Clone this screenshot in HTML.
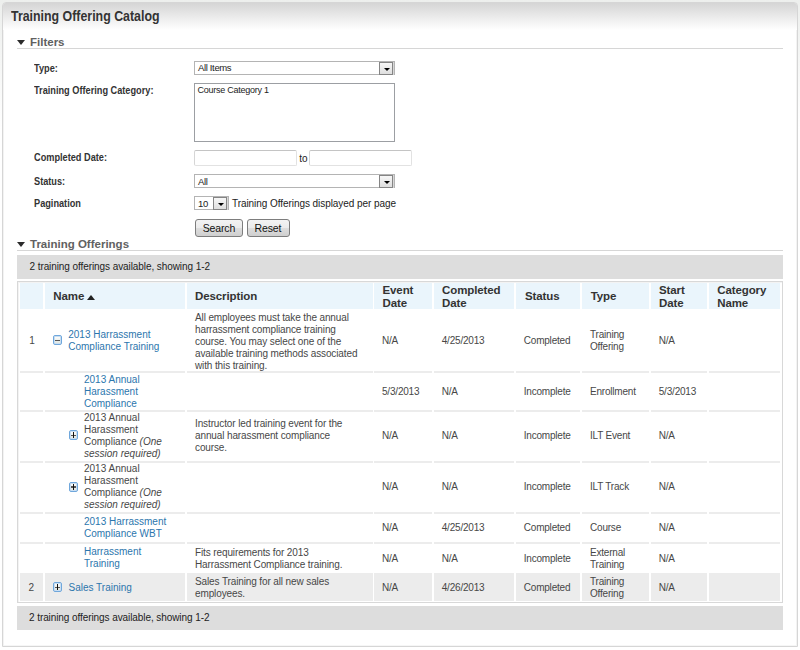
<!DOCTYPE html>
<html><head><meta charset="utf-8"><style>
html,body{margin:0;padding:0;}
body{width:800px;height:650px;position:relative;overflow:hidden;background:linear-gradient(#edefed,#ffffff 130px) no-repeat #fff;font-family:"Liberation Sans",sans-serif;}
.bgw{position:absolute;left:0;top:647px;width:800px;height:3px;background:#fff;}
.t{position:absolute;white-space:nowrap;}
.r{position:absolute;}
.ic{width:9px;height:10px;box-sizing:border-box;border:1px solid #6fa7dc;border-radius:2px;background:linear-gradient(#ffffff,#dde3dd);box-shadow:inset 0 0 0 1px #c9def2;}
.ic .h{position:absolute;left:1px;top:3.5px;width:5px;height:1.5px;background:#555;}
.ic .v{position:absolute;left:3px;top:1px;width:1px;height:6px;background:#111;}
</style></head><body>
<div class="r" style="left:2px;top:2px;width:795px;height:644px;border:1px solid #d6d6d6;border-radius:4px 4px 0 0;background:#fff;box-sizing:border-box;width:796px;height:645px;box-shadow:inset 1px 0 0 #f3f3f3, inset -1px 0 0 #f3f3f3, inset 0 -1px 0 #f6f6f6;"></div>
<div class="r" style="left:3px;top:3px;width:794px;height:27px;background:linear-gradient(#d5d5d5,#e6e6e6 40%,#fff);border-radius:3px 3px 0 0;"></div>
<div class="t" style="left:11px;top:9.95px;font-size:14px;line-height:12px;font-weight:bold;color:#333;letter-spacing:0px;transform:scaleX(0.884);transform-origin:0 0;">Training Offering Catalog</div>
<div class="r" style="left:17px;top:40px;width:0;height:0;border-left:4px solid transparent;border-right:4px solid transparent;border-top:5px solid #2b2b2b;"></div>
<div class="t" style="left:30px;top:35.82px;font-size:11.5px;line-height:12px;font-weight:bold;color:#616161;letter-spacing:0px;">Filters</div>
<div class="r" style="left:17px;top:48px;width:766px;height:1px;background:#d6d6d6;"></div>
<div class="t" style="left:34px;top:61.66px;font-size:10.5px;line-height:12px;font-weight:bold;color:#333;letter-spacing:0px;transform:scaleX(0.875);transform-origin:0 0;">Type:</div>
<div class="t" style="left:34px;top:84.16px;font-size:10.5px;line-height:12px;font-weight:bold;color:#333;letter-spacing:0px;transform:scaleX(0.875);transform-origin:0 0;">Training Offering Category:</div>
<div class="t" style="left:34px;top:150.86px;font-size:10.5px;line-height:12px;font-weight:bold;color:#333;letter-spacing:0px;transform:scaleX(0.875);transform-origin:0 0;">Completed Date:</div>
<div class="t" style="left:34px;top:174.56px;font-size:10.5px;line-height:12px;font-weight:bold;color:#333;letter-spacing:0px;transform:scaleX(0.875);transform-origin:0 0;">Status:</div>
<div class="t" style="left:34px;top:196.86px;font-size:10.5px;line-height:12px;font-weight:bold;color:#333;letter-spacing:0px;transform:scaleX(0.875);transform-origin:0 0;">Pagination</div>
<div class="r" style="left:194px;top:61px;width:201px;height:14px;border:1px solid #b4b4b4;box-sizing:border-box;background:#fff;"></div>
<div class="r" style="left:379px;top:62px;width:14px;height:13px;border:1px solid #858585;box-sizing:border-box;background:linear-gradient(#f7f7f7,#dedede);box-shadow:1px 0 0 #d8d8d8;"></div>
<div class="r" style="left:383.5px;top:68.2px;width:0;height:0;border-left:3px solid transparent;border-right:3px solid transparent;border-top:3.5px solid #000;"></div>
<div class="t" style="left:198px;top:62.21px;font-size:9.5px;line-height:12px;font-weight:normal;color:#222;letter-spacing:-0.35px;">All Items</div>
<div class="r" style="left:194px;top:83px;width:201px;height:59px;border:1px solid #9c9fa3;box-sizing:border-box;background:#fff;"></div>
<div class="t" style="left:197.5px;top:83.58px;font-size:9px;line-height:12px;font-weight:normal;color:#222;letter-spacing:-0.25px;">Course Category 1</div>
<div class="r" style="left:194px;top:150px;width:103px;height:16px;border:1px solid #e2e2e2;border-top-color:#c4c4c4;border-left-color:#d6d6d6;border-radius:2px;box-sizing:border-box;background:#fff;"></div>
<div class="t" style="left:299.2px;top:152.73px;font-size:10px;line-height:12px;font-weight:normal;color:#222;letter-spacing:0px;">to</div>
<div class="r" style="left:309px;top:150px;width:103px;height:16px;border:1px solid #e2e2e2;border-top-color:#c4c4c4;border-left-color:#d6d6d6;border-radius:2px;box-sizing:border-box;background:#fff;"></div>
<div class="r" style="left:194px;top:174px;width:201px;height:14px;border:1px solid #b4b4b4;box-sizing:border-box;background:#fff;"></div>
<div class="r" style="left:379px;top:175px;width:14px;height:13px;border:1px solid #858585;box-sizing:border-box;background:linear-gradient(#f7f7f7,#dedede);box-shadow:1px 0 0 #d8d8d8;"></div>
<div class="r" style="left:383.5px;top:181.2px;width:0;height:0;border-left:3px solid transparent;border-right:3px solid transparent;border-top:3.5px solid #000;"></div>
<div class="t" style="left:198px;top:175.71px;font-size:9.5px;line-height:12px;font-weight:normal;color:#222;letter-spacing:-0.35px;">All</div>
<div class="r" style="left:194px;top:196px;width:35px;height:14px;border:1px solid #b4b4b4;box-sizing:border-box;background:#fff;"></div>
<div class="r" style="left:213px;top:197px;width:14px;height:13px;border:1px solid #858585;box-sizing:border-box;background:linear-gradient(#f7f7f7,#dedede);box-shadow:1px 0 0 #d8d8d8;"></div>
<div class="r" style="left:217.5px;top:203.2px;width:0;height:0;border-left:3px solid transparent;border-right:3px solid transparent;border-top:3.5px solid #000;"></div>
<div class="t" style="left:198px;top:198.01px;font-size:9.5px;line-height:12px;font-weight:normal;color:#222;letter-spacing:-0.35px;">10</div>
<div class="t" style="left:232px;top:197.84px;font-size:10px;line-height:12px;font-weight:normal;color:#222;letter-spacing:-0.06px;">Training Offerings displayed per page</div>
<div class="r" style="left:195px;top:219px;width:48px;height:18px;border:1px solid #7d7d7d;border-radius:3px;box-sizing:border-box;background:linear-gradient(#f3f3f3 0%,#ebebeb 50%,#dddddd 51%,#cfcfcf 100%);"></div>
<div class="t" style="left:202.75px;top:221.96px;font-size:10.5px;line-height:12px;font-weight:normal;color:#111;letter-spacing:-0.15px;">Search</div>
<div class="r" style="left:247px;top:219px;width:43px;height:18px;border:1px solid #7d7d7d;border-radius:3px;box-sizing:border-box;background:linear-gradient(#f3f3f3 0%,#ebebeb 50%,#dddddd 51%,#cfcfcf 100%);"></div>
<div class="t" style="left:254.6px;top:221.96px;font-size:10.5px;line-height:12px;font-weight:normal;color:#111;letter-spacing:-0.15px;">Reset</div>
<div class="r" style="left:17px;top:242px;width:0;height:0;border-left:4px solid transparent;border-right:4px solid transparent;border-top:5px solid #2b2b2b;"></div>
<div class="t" style="left:30px;top:237.62px;font-size:11.5px;line-height:12px;font-weight:bold;color:#616161;letter-spacing:0px;">Training Offerings</div>
<div class="r" style="left:17px;top:250px;width:766px;height:1px;background:#d6d6d6;"></div>
<div class="r" style="left:17px;top:255px;width:766px;height:24px;background:#dddddd;"></div>
<div class="t" style="left:29.5px;top:261.14px;font-size:10px;line-height:12px;font-weight:normal;color:#222;letter-spacing:-0.08px;">2 training offerings available, showing 1-2</div>
<div class="r" style="left:17px;top:281px;width:766px;height:322px;border:1px solid #d8d8d8;box-sizing:border-box;box-shadow:inset 1px 1px 0 #f3f3f3;"></div>
<div class="r" style="left:20px;top:283px;width:23px;height:26px;background:#eaf5fc;"></div>
<div class="r" style="left:45px;top:283px;width:140px;height:26px;background:#eaf5fc;"></div>
<div class="r" style="left:187px;top:283px;width:186px;height:26px;background:#eaf5fc;"></div>
<div class="r" style="left:374px;top:283px;width:58px;height:26px;background:#eaf5fc;"></div>
<div class="r" style="left:434px;top:283px;width:80px;height:26px;background:#eaf5fc;"></div>
<div class="r" style="left:516px;top:283px;width:64px;height:26px;background:#eaf5fc;"></div>
<div class="r" style="left:582px;top:283px;width:67px;height:26px;background:#eaf5fc;"></div>
<div class="r" style="left:651px;top:283px;width:56px;height:26px;background:#eaf5fc;"></div>
<div class="r" style="left:709px;top:283px;width:71px;height:26px;background:#eaf5fc;"></div>
<div class="t" style="left:53.25px;top:290.02px;font-size:11.5px;line-height:12px;font-weight:bold;color:#333;letter-spacing:-0.1px;">Name</div>
<div class="r" style="left:87px;top:295px;width:0;height:0;border-left:4px solid transparent;border-right:4px solid transparent;border-bottom:5px solid #222;"></div>
<div class="t" style="left:195px;top:290.02px;font-size:11.5px;line-height:12px;font-weight:bold;color:#333;letter-spacing:-0.1px;">Description</div>
<div class="t" style="left:382.5px;top:283.52px;font-size:11.5px;line-height:13px;font-weight:bold;color:#333;letter-spacing:-0.1px;">Event<br>Date</div>
<div class="t" style="left:442px;top:283.52px;font-size:11.5px;line-height:13px;font-weight:bold;color:#333;letter-spacing:-0.1px;">Completed<br>Date</div>
<div class="t" style="left:525px;top:290.02px;font-size:11.5px;line-height:12px;font-weight:bold;color:#333;letter-spacing:-0.1px;">Status</div>
<div class="t" style="left:590.7px;top:290.02px;font-size:11.5px;line-height:12px;font-weight:bold;color:#333;letter-spacing:-0.1px;">Type</div>
<div class="t" style="left:659px;top:283.52px;font-size:11.5px;line-height:13px;font-weight:bold;color:#333;letter-spacing:-0.1px;">Start<br>Date</div>
<div class="t" style="left:717.2px;top:283.52px;font-size:11.5px;line-height:13px;font-weight:bold;color:#333;letter-spacing:-0.1px;">Category<br>Name</div>
<div class="r" style="left:20px;top:371px;width:23px;height:2px;background:#ececec;"></div>
<div class="r" style="left:45px;top:371px;width:140px;height:2px;background:#ececec;"></div>
<div class="r" style="left:187px;top:371px;width:186px;height:2px;background:#ececec;"></div>
<div class="r" style="left:374px;top:371px;width:58px;height:2px;background:#ececec;"></div>
<div class="r" style="left:434px;top:371px;width:80px;height:2px;background:#ececec;"></div>
<div class="r" style="left:516px;top:371px;width:64px;height:2px;background:#ececec;"></div>
<div class="r" style="left:582px;top:371px;width:67px;height:2px;background:#ececec;"></div>
<div class="r" style="left:651px;top:371px;width:56px;height:2px;background:#ececec;"></div>
<div class="r" style="left:709px;top:371px;width:71px;height:2px;background:#ececec;"></div>
<div class="r" style="left:20px;top:410px;width:23px;height:2px;background:#ececec;"></div>
<div class="r" style="left:45px;top:410px;width:140px;height:2px;background:#ececec;"></div>
<div class="r" style="left:187px;top:410px;width:186px;height:2px;background:#ececec;"></div>
<div class="r" style="left:374px;top:410px;width:58px;height:2px;background:#ececec;"></div>
<div class="r" style="left:434px;top:410px;width:80px;height:2px;background:#ececec;"></div>
<div class="r" style="left:516px;top:410px;width:64px;height:2px;background:#ececec;"></div>
<div class="r" style="left:582px;top:410px;width:67px;height:2px;background:#ececec;"></div>
<div class="r" style="left:651px;top:410px;width:56px;height:2px;background:#ececec;"></div>
<div class="r" style="left:709px;top:410px;width:71px;height:2px;background:#ececec;"></div>
<div class="r" style="left:20px;top:461px;width:23px;height:2px;background:#ececec;"></div>
<div class="r" style="left:45px;top:461px;width:140px;height:2px;background:#ececec;"></div>
<div class="r" style="left:187px;top:461px;width:186px;height:2px;background:#ececec;"></div>
<div class="r" style="left:374px;top:461px;width:58px;height:2px;background:#ececec;"></div>
<div class="r" style="left:434px;top:461px;width:80px;height:2px;background:#ececec;"></div>
<div class="r" style="left:516px;top:461px;width:64px;height:2px;background:#ececec;"></div>
<div class="r" style="left:582px;top:461px;width:67px;height:2px;background:#ececec;"></div>
<div class="r" style="left:651px;top:461px;width:56px;height:2px;background:#ececec;"></div>
<div class="r" style="left:709px;top:461px;width:71px;height:2px;background:#ececec;"></div>
<div class="r" style="left:20px;top:512px;width:23px;height:2px;background:#ececec;"></div>
<div class="r" style="left:45px;top:512px;width:140px;height:2px;background:#ececec;"></div>
<div class="r" style="left:187px;top:512px;width:186px;height:2px;background:#ececec;"></div>
<div class="r" style="left:374px;top:512px;width:58px;height:2px;background:#ececec;"></div>
<div class="r" style="left:434px;top:512px;width:80px;height:2px;background:#ececec;"></div>
<div class="r" style="left:516px;top:512px;width:64px;height:2px;background:#ececec;"></div>
<div class="r" style="left:582px;top:512px;width:67px;height:2px;background:#ececec;"></div>
<div class="r" style="left:651px;top:512px;width:56px;height:2px;background:#ececec;"></div>
<div class="r" style="left:709px;top:512px;width:71px;height:2px;background:#ececec;"></div>
<div class="r" style="left:20px;top:542px;width:23px;height:2px;background:#ececec;"></div>
<div class="r" style="left:45px;top:542px;width:140px;height:2px;background:#ececec;"></div>
<div class="r" style="left:187px;top:542px;width:186px;height:2px;background:#ececec;"></div>
<div class="r" style="left:374px;top:542px;width:58px;height:2px;background:#ececec;"></div>
<div class="r" style="left:434px;top:542px;width:80px;height:2px;background:#ececec;"></div>
<div class="r" style="left:516px;top:542px;width:64px;height:2px;background:#ececec;"></div>
<div class="r" style="left:582px;top:542px;width:67px;height:2px;background:#ececec;"></div>
<div class="r" style="left:651px;top:542px;width:56px;height:2px;background:#ececec;"></div>
<div class="r" style="left:709px;top:542px;width:71px;height:2px;background:#ececec;"></div>
<div class="r" style="left:20px;top:573px;width:23px;height:2px;background:#ececec;"></div>
<div class="r" style="left:45px;top:573px;width:140px;height:2px;background:#ececec;"></div>
<div class="r" style="left:187px;top:573px;width:186px;height:2px;background:#ececec;"></div>
<div class="r" style="left:374px;top:573px;width:58px;height:2px;background:#ececec;"></div>
<div class="r" style="left:434px;top:573px;width:80px;height:2px;background:#ececec;"></div>
<div class="r" style="left:516px;top:573px;width:64px;height:2px;background:#ececec;"></div>
<div class="r" style="left:582px;top:573px;width:67px;height:2px;background:#ececec;"></div>
<div class="r" style="left:651px;top:573px;width:56px;height:2px;background:#ececec;"></div>
<div class="r" style="left:709px;top:573px;width:71px;height:2px;background:#ececec;"></div>
<div class="r" style="left:20px;top:573px;width:23px;height:28px;background:#ececec;"></div>
<div class="r" style="left:45px;top:573px;width:140px;height:28px;background:#ececec;"></div>
<div class="r" style="left:187px;top:573px;width:186px;height:28px;background:#ececec;"></div>
<div class="r" style="left:374px;top:573px;width:58px;height:28px;background:#ececec;"></div>
<div class="r" style="left:434px;top:573px;width:80px;height:28px;background:#ececec;"></div>
<div class="r" style="left:516px;top:573px;width:64px;height:28px;background:#ececec;"></div>
<div class="r" style="left:582px;top:573px;width:67px;height:28px;background:#ececec;"></div>
<div class="r" style="left:651px;top:573px;width:56px;height:28px;background:#ececec;"></div>
<div class="r" style="left:709px;top:573px;width:71px;height:28px;background:#ececec;"></div>
<div class="t" style="left:29.25px;top:334.54px;font-size:10px;line-height:12px;font-weight:normal;color:#474747;letter-spacing:0px;">1</div>
<div class="r ic" style="left:53px;top:335px;"><div class="h"></div></div>
<div class="t" style="left:68.25px;top:328.54px;font-size:10px;line-height:12px;font-weight:normal;color:#2c76ad;letter-spacing:0px;">2013 Harrassment<br>Compliance Training</div>
<div class="t" style="left:195px;top:311.54px;font-size:10px;line-height:12px;font-weight:normal;color:#474747;letter-spacing:-0.12px;">All employees must take the annual<br>harrassment compliance training<br>course. You may select one of the<br>available training methods associated<br>with this training.</div>
<div class="t" style="left:382px;top:335.29px;font-size:10px;line-height:12px;font-weight:normal;color:#474747;letter-spacing:-0.2px;">N/A</div>
<div class="t" style="left:441.75px;top:335.29px;font-size:10px;line-height:12px;font-weight:normal;color:#474747;letter-spacing:-0.2px;">4/25/2013</div>
<div class="t" style="left:523.75px;top:335.29px;font-size:10px;line-height:12px;font-weight:normal;color:#474747;letter-spacing:-0.2px;">Completed</div>
<div class="t" style="left:590px;top:328.54px;font-size:10px;line-height:12px;font-weight:normal;color:#474747;letter-spacing:-0.2px;">Training<br>Offering</div>
<div class="t" style="left:658.75px;top:335.29px;font-size:10px;line-height:12px;font-weight:normal;color:#474747;letter-spacing:-0.2px;">N/A</div>
<div class="t" style="left:84px;top:373.54px;font-size:10px;line-height:12px;font-weight:normal;color:#2c76ad;letter-spacing:0px;">2013 Annual<br>Harassment<br>Compliance</div>
<div class="t" style="left:382px;top:385.54px;font-size:10px;line-height:12px;font-weight:normal;color:#474747;letter-spacing:-0.2px;">5/3/2013</div>
<div class="t" style="left:441.75px;top:385.54px;font-size:10px;line-height:12px;font-weight:normal;color:#474747;letter-spacing:-0.2px;">N/A</div>
<div class="t" style="left:523.75px;top:385.54px;font-size:10px;line-height:12px;font-weight:normal;color:#474747;letter-spacing:-0.2px;">Incomplete</div>
<div class="t" style="left:590px;top:385.54px;font-size:10px;line-height:12px;font-weight:normal;color:#474747;letter-spacing:-0.2px;">Enrollment</div>
<div class="t" style="left:658.75px;top:385.54px;font-size:10px;line-height:12px;font-weight:normal;color:#474747;letter-spacing:-0.2px;">5/3/2013</div>
<div class="r ic" style="left:69px;top:430px;"><div class="h"></div><div class="v"></div></div>
<div class="t" style="left:84px;top:412.14px;font-size:10px;line-height:12px;font-weight:normal;color:#474747;letter-spacing:0px;">2013 Annual<br>Harassment<br>Compliance <i>(One</i><br><i>session required)</i></div>
<div class="t" style="left:195px;top:418.04px;font-size:10px;line-height:12px;font-weight:normal;color:#474747;letter-spacing:-0.12px;">Instructor led training event for the<br>annual harassment compliance<br>course.</div>
<div class="t" style="left:382px;top:430.04px;font-size:10px;line-height:12px;font-weight:normal;color:#474747;letter-spacing:-0.2px;">N/A</div>
<div class="t" style="left:441.75px;top:430.04px;font-size:10px;line-height:12px;font-weight:normal;color:#474747;letter-spacing:-0.2px;">N/A</div>
<div class="t" style="left:523.75px;top:430.04px;font-size:10px;line-height:12px;font-weight:normal;color:#474747;letter-spacing:-0.2px;">Incomplete</div>
<div class="t" style="left:590px;top:430.04px;font-size:10px;line-height:12px;font-weight:normal;color:#474747;letter-spacing:-0.2px;">ILT Event</div>
<div class="t" style="left:658.75px;top:430.04px;font-size:10px;line-height:12px;font-weight:normal;color:#474747;letter-spacing:-0.2px;">N/A</div>
<div class="r ic" style="left:69px;top:481.5px;"><div class="h"></div><div class="v"></div></div>
<div class="t" style="left:84px;top:463.04px;font-size:10px;line-height:12px;font-weight:normal;color:#474747;letter-spacing:0px;">2013 Annual<br>Harassment<br>Compliance <i>(One</i><br><i>session required)</i></div>
<div class="t" style="left:382px;top:481.04px;font-size:10px;line-height:12px;font-weight:normal;color:#474747;letter-spacing:-0.2px;">N/A</div>
<div class="t" style="left:441.75px;top:481.04px;font-size:10px;line-height:12px;font-weight:normal;color:#474747;letter-spacing:-0.2px;">N/A</div>
<div class="t" style="left:523.75px;top:481.04px;font-size:10px;line-height:12px;font-weight:normal;color:#474747;letter-spacing:-0.2px;">Incomplete</div>
<div class="t" style="left:590px;top:481.04px;font-size:10px;line-height:12px;font-weight:normal;color:#474747;letter-spacing:-0.2px;">ILT Track</div>
<div class="t" style="left:658.75px;top:481.04px;font-size:10px;line-height:12px;font-weight:normal;color:#474747;letter-spacing:-0.2px;">N/A</div>
<div class="t" style="left:84px;top:515.53px;font-size:10px;line-height:12px;font-weight:normal;color:#2c76ad;letter-spacing:0px;">2013 Harrassment<br>Compliance WBT</div>
<div class="t" style="left:382px;top:521.53px;font-size:10px;line-height:12px;font-weight:normal;color:#474747;letter-spacing:-0.2px;">N/A</div>
<div class="t" style="left:441.75px;top:521.53px;font-size:10px;line-height:12px;font-weight:normal;color:#474747;letter-spacing:-0.2px;">4/25/2013</div>
<div class="t" style="left:523.75px;top:521.53px;font-size:10px;line-height:12px;font-weight:normal;color:#474747;letter-spacing:-0.2px;">Completed</div>
<div class="t" style="left:590px;top:521.53px;font-size:10px;line-height:12px;font-weight:normal;color:#474747;letter-spacing:-0.2px;">Course</div>
<div class="t" style="left:658.75px;top:521.53px;font-size:10px;line-height:12px;font-weight:normal;color:#474747;letter-spacing:-0.2px;">N/A</div>
<div class="t" style="left:84px;top:546.13px;font-size:10px;line-height:12px;font-weight:normal;color:#2c76ad;letter-spacing:0px;">Harrassment<br>Training</div>
<div class="t" style="left:195px;top:546.53px;font-size:10px;line-height:12px;font-weight:normal;color:#474747;letter-spacing:-0.12px;">Fits requirements for 2013<br>Harrassment Compliance training.</div>
<div class="t" style="left:382px;top:552.53px;font-size:10px;line-height:12px;font-weight:normal;color:#474747;letter-spacing:-0.2px;">N/A</div>
<div class="t" style="left:441.75px;top:552.53px;font-size:10px;line-height:12px;font-weight:normal;color:#474747;letter-spacing:-0.2px;">N/A</div>
<div class="t" style="left:523.75px;top:552.53px;font-size:10px;line-height:12px;font-weight:normal;color:#474747;letter-spacing:-0.2px;">Incomplete</div>
<div class="t" style="left:590px;top:546.53px;font-size:10px;line-height:12px;font-weight:normal;color:#474747;letter-spacing:-0.2px;">External<br>Training</div>
<div class="t" style="left:658.75px;top:552.53px;font-size:10px;line-height:12px;font-weight:normal;color:#474747;letter-spacing:-0.2px;">N/A</div>
<div class="t" style="left:28.4px;top:581.93px;font-size:10px;line-height:12px;font-weight:normal;color:#474747;letter-spacing:0px;">2</div>
<div class="r ic" style="left:53px;top:582px;"><div class="h"></div><div class="v"></div></div>
<div class="t" style="left:68.5px;top:581.93px;font-size:10px;line-height:12px;font-weight:normal;color:#2c76ad;letter-spacing:0px;">Sales Training</div>
<div class="t" style="left:195px;top:575.74px;font-size:10px;line-height:12px;font-weight:normal;color:#474747;letter-spacing:-0.12px;">Sales Training for all new sales<br>employees.</div>
<div class="t" style="left:382px;top:581.53px;font-size:10px;line-height:12px;font-weight:normal;color:#474747;letter-spacing:-0.2px;">N/A</div>
<div class="t" style="left:441.75px;top:581.53px;font-size:10px;line-height:12px;font-weight:normal;color:#474747;letter-spacing:-0.2px;">4/26/2013</div>
<div class="t" style="left:523.75px;top:581.53px;font-size:10px;line-height:12px;font-weight:normal;color:#474747;letter-spacing:-0.2px;">Completed</div>
<div class="t" style="left:590px;top:575.74px;font-size:10px;line-height:12px;font-weight:normal;color:#474747;letter-spacing:-0.2px;">Training<br>Offering</div>
<div class="t" style="left:658.75px;top:581.53px;font-size:10px;line-height:12px;font-weight:normal;color:#474747;letter-spacing:-0.2px;">N/A</div>
<div class="r" style="left:17px;top:605.5px;width:766px;height:24px;background:#dddddd;"></div>
<div class="t" style="left:29px;top:611.83px;font-size:10px;line-height:12px;font-weight:normal;color:#222;letter-spacing:-0.08px;">2 training offerings available, showing 1-2</div>
</body></html>
